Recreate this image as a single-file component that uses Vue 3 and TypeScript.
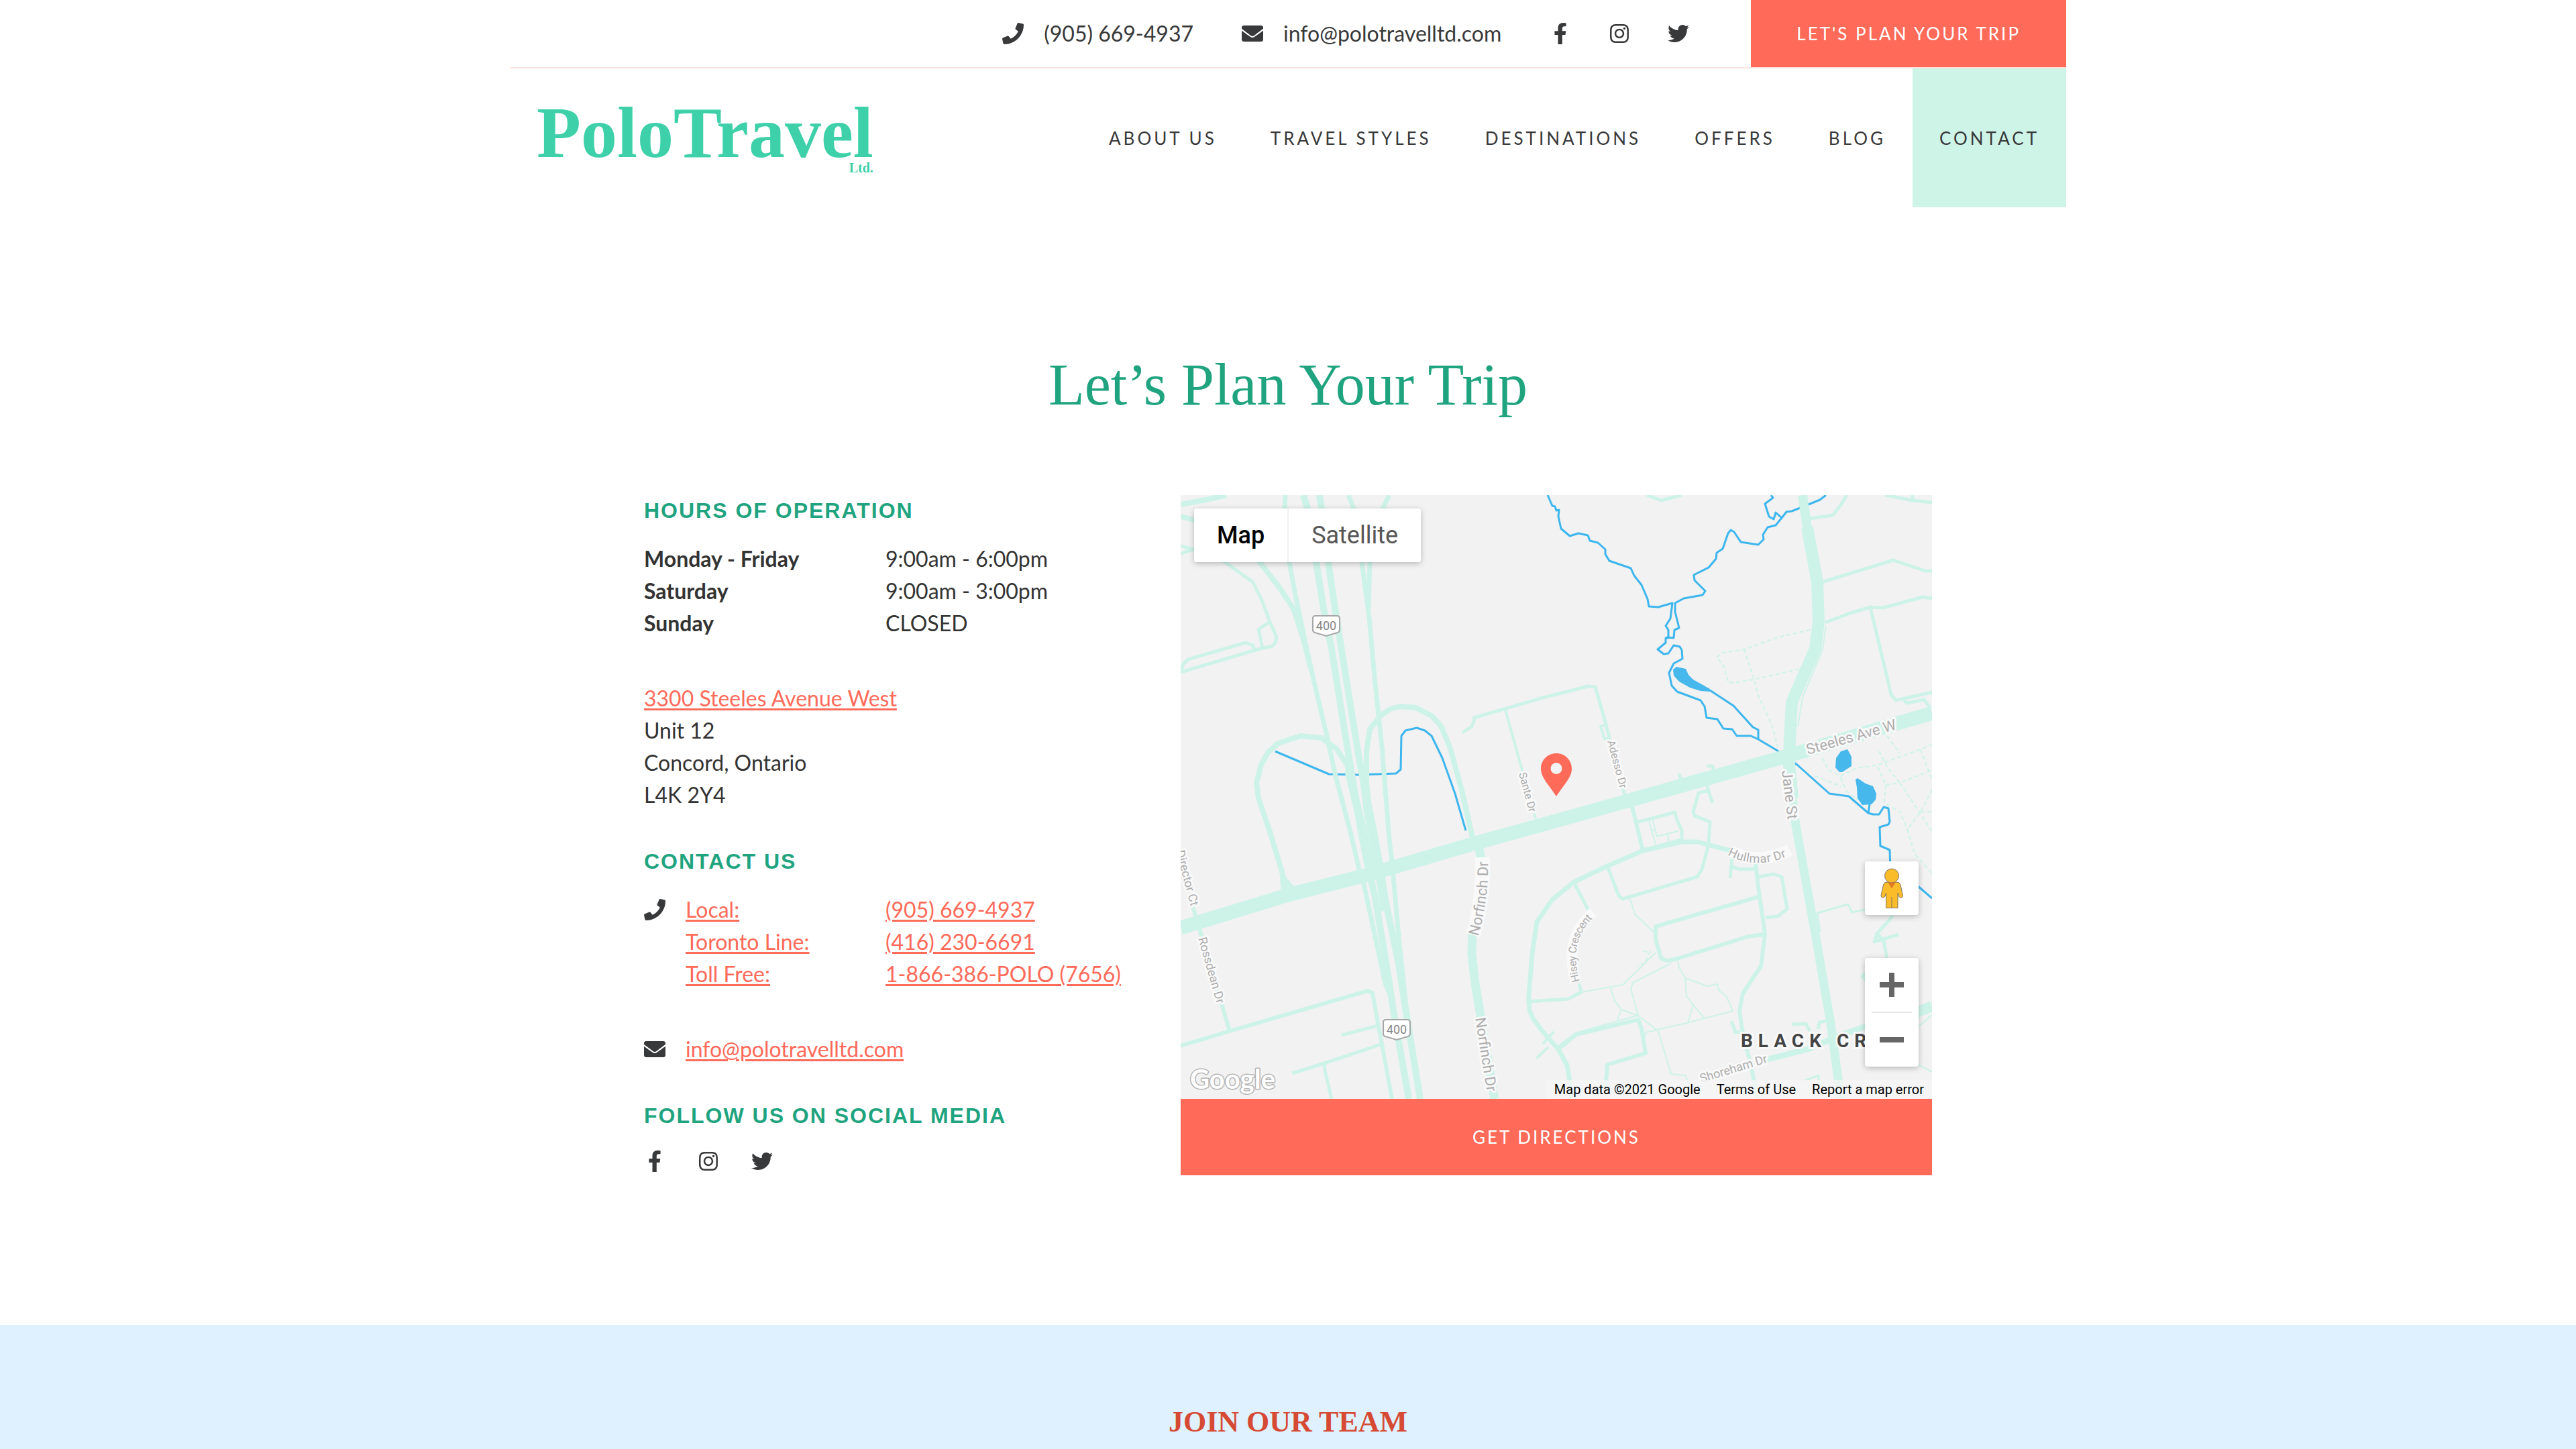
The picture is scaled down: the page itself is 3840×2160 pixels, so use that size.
<script setup lang="ts">
interface Icon {
  box: string
  path: string
}

interface Road {
  d: string
  w: number
}

interface StreetLabel {
  text: string
  x: number
  y: number
  angle: number
  size: number
}

const icons: Record<string, Icon> = {
  phone: {
    box: '0 0 512 512',
    path: 'M493.4 24.6l-104-24c-11.3-2.6-22.9 3.3-27.5 13.9l-48 112c-4.2 9.8-1.4 21.3 6.9 28l60.6 49.6c-36 76.7-98.9 140.5-177.2 177.2l-49.6-60.6c-6.8-8.3-18.2-11.1-28-6.9l-112 48C3.9 366.5-2 378.1.6 389.4l24 104C27.1 504.2 36.7 512 48 512c256.1 0 464-207.5 464-464 0-11.2-7.7-20.9-18.6-23.4z',
  },
  mail: {
    box: '0 0 512 512',
    path: 'M502.3 190.8c3.9-3.1 9.7-.2 9.7 4.7V400c0 26.5-21.5 48-48 48H48c-26.5 0-48-21.5-48-48V195.6c0-5 5.7-7.8 9.7-4.7 22.4 17.4 52.1 39.5 154.1 113.6 21.1 15.4 56.7 47.8 92.2 47.6 35.7.3 72-32.8 92.3-47.6 102-74.1 131.6-96.3 154-113.7zM256 320c23.2.4 56.6-29.2 73.4-41.4 132.7-96.3 142.8-104.7 173.4-128.7 5.8-4.5 9.2-11.5 9.2-18.9v-19c0-26.5-21.5-48-48-48H48c-26.5 0-48 21.5-48 48v19c0 7.4 3.4 14.3 9.2 18.9 30.6 23.9 40.7 32.4 173.4 128.7 16.8 12.2 50.2 41.8 73.4 41.4z',
  },
}

const socials: { name: string; icon: Icon }[] = [
  {
    name: 'Facebook',
    icon: {
      box: '0 0 320 512',
      path: 'M279.14 288l14.22-92.66h-88.91v-60.13c0-25.35 12.42-50.06 52.24-50.06h40.42V6.26S260.43 0 225.36 0c-73.22 0-121.08 44.38-121.08 124.72v70.62H22.89V288h81.39v224h100.17V288z',
    },
  },
  {
    name: 'Instagram',
    icon: {
      box: '0 0 448 512',
      path: 'M224.1 141c-63.6 0-114.9 51.3-114.9 114.9s51.3 114.9 114.9 114.9S339 319.5 339 255.9 287.7 141 224.1 141zm0 189.6c-41.1 0-74.7-33.5-74.7-74.7s33.5-74.7 74.7-74.7 74.7 33.5 74.7 74.7-33.6 74.7-74.7 74.7zm146.4-194.3c0 14.9-12 26.8-26.8 26.8-14.9 0-26.8-12-26.8-26.8s12-26.8 26.8-26.8 26.8 12 26.8 26.8zm76.1 27.2c-1.7-35.9-9.9-67.7-36.2-93.9-26.2-26.2-58-34.4-93.9-36.2-37-2.1-147.9-2.1-184.9 0-35.8 1.7-67.6 9.9-93.9 36.1s-34.4 58-36.2 93.9c-2.1 37-2.1 147.9 0 184.9 1.7 35.9 9.9 67.7 36.2 93.9s58 34.4 93.9 36.2c37 2.1 147.9 2.1 184.9 0 35.9-1.7 67.7-9.9 93.9-36.2 26.2-26.2 34.4-58 36.2-93.9 2.1-37 2.1-147.8 0-184.8zM398.8 388c-7.8 19.6-22.9 34.7-42.6 42.6-29.5 11.7-99.5 9-132.1 9s-102.7 2.6-132.1-9c-19.6-7.8-34.7-22.9-42.6-42.6-11.7-29.5-9-99.5-9-132.1s-2.6-102.7 9-132.1c7.8-19.6 22.9-34.7 42.6-42.6 29.5-11.7 99.5-9 132.1-9s102.7-2.6 132.1 9c19.6 7.8 34.7 22.9 42.6 42.6 11.7 29.5 9 99.5 9 132.1s2.7 102.7-9 132.1z',
    },
  },
  {
    name: 'Twitter',
    icon: {
      box: '0 0 512 512',
      path: 'M459.37 151.716c.325 4.548.325 9.097.325 13.645 0 138.72-105.583 298.558-298.558 298.558-59.452 0-114.68-17.219-161.137-47.106 8.447.974 16.568 1.299 25.34 1.299 49.055 0 94.213-16.568 130.274-44.832-46.132-.975-84.792-31.188-98.112-72.772 6.498.974 12.995 1.624 19.818 1.624 9.421 0 18.843-1.3 27.614-3.573-48.081-9.747-84.143-51.98-84.143-102.985v-1.299c13.969 7.797 30.214 12.67 47.431 13.319-28.264-18.843-46.781-51.005-46.781-87.391 0-19.492 5.197-37.36 14.294-52.954 51.655 63.675 129.3 105.258 216.365 109.807-1.624-7.797-2.599-15.918-2.599-24.04 0-57.828 46.782-104.934 104.934-104.934 30.213 0 57.502 12.67 76.67 33.137 23.715-4.548 46.456-13.32 66.599-25.34-7.798 24.366-24.366 44.833-46.132 57.827 21.117-2.273 41.584-8.122 60.426-16.243-14.292 20.791-32.161 39.308-52.628 54.253z',
    },
  },
]

const menu = ['About Us', 'Travel Styles', 'Destinations', 'Offers', 'Blog', 'Contact']
const currentPage = 'Contact'

const hours = [
  { day: 'Monday - Friday', time: '9:00am - 6:00pm' },
  { day: 'Saturday', time: '9:00am - 3:00pm' },
  { day: 'Sunday', time: 'CLOSED' },
]

const phones = [
  { label: 'Local:', number: '(905) 669-4937', tel: '+19056694937' },
  { label: 'Toronto Line:', number: '(416) 230-6691', tel: '+14162306691' },
  { label: 'Toll Free:', number: '1-866-386-POLO (7656)', tel: '+18663867656' },
]

/* Map geometry, in the 1120 x 900 space of the map drawing. */
const rivers = [
  'M547 0L554 16L558 17L560 23L564 22L563 32L567 50L580 61L593 57L607 60L610 68L622 71L633 81L633 88L639 98L671 109L676 120L687 134L696 155L698 166L712 167L733 161L730 184L723 195L727 201L727 213L723 213L723 220L711 230L720 237L727 236L735 224L744 226L747 231L748 244L735 251L728 265L732 284L740 293L775 306L781 315L784 332L800 334L809 348L822 349L829 359L850 359L861 364L888 380L919 402L967 445L996 449L1025 474L1032 476L1041 476L1048 465L1055 467L1057 487L1055 491L1042 495L1043 523L1057 529L1058 560',
  'M962 0L953 7L936 14L921 20L911 24L903 25L896 34L887 45L875 48L868 59L869 66L861 74L835 70L825 55L820 52L816 57L808 80L799 86L798 95L787 108L765 119L766 127L782 143L778 149L750 154L737 161L737 174L743 198L736 201L735 213L724 212',
  'M880 0L883 4L871 13L877 32L884 36L887 26L896 34',
  'M789 291L824 314L853 346L861 350L861 364',
  'M1027 461L1025 474',
  'M1098 582L1120 601',
  'M141 382L221 416L265 417L321 415L328 409L329 359L335 351L352 347L364 351L374 359L390 392L409 445L425 500',
]

const lakes = [
  'M734 260L739 256L753 259L757 268L764 275L789 289L789 293L775 292L759 287L743 278L735 269Z',
  'M984 382L994 379L1000 390L1000 404L986 413L982 413L976 406L977 392Z',
  'M1006 424L1009 422L1021 430L1032 434L1037 445L1036 454L1030 461L1016 462L1009 452L1008 436Z',
]

const roads: Road[] = [
  { d: 'M0 645L164 595L279 566L439 519L580 480L662 457L904 389L1120 325', w: 21 },
  { d: 'M927 0L934 49L944 105', w: 14 },
  { d: 'M934 49L949 129L951 189L946 229L911 309L908 365L907 402L912 452', w: 18 },
  { d: 'M908 420L917 492L946 654L969 788L984 900', w: 13 },
  { d: 'M0 14L38 7L68 0', w: 8 },
  { d: 'M0 32L40 42L90 70L118 100L148 139L168 169L183 215L194 259', w: 8 },
  { d: 'M0 76L20 81L0 87', w: 5 },
  { d: 'M40 84L66 100L108 130L122 159L133 189L143 212L141 220L137 225L122 228L0 264', w: 5 },
  { d: 'M0 262L4 252L11 245L97 220L108 224L110 231', w: 5 },
  { d: 'M133 189L116 200L122 228', w: 5 },
  { d: 'M156 0L155 20L162 100L171 149L187 225L198 275L217 355L231 419L253 502L266 558L273 580L286 640L305 728L312 745', w: 7 },
  { d: 'M183 0L189 20L202 100L214 175L225 229L244 349L259 440L269 502L280 558L290 600L305 690L319 780L340 900', w: 10 },
  { d: 'M207 0L210 20L220 100L231 175L248 282L267 399L288 502L298 558L305 603L325 699L334 758L357 900', w: 10 },
  { d: 'M250 410L272 502L284 562', w: 12 },
  { d: 'M271 400L279 470L296 560L305 620', w: 13 },
  { d: 'M250 0L258 20L270 100L281 182L290 282L300 375L310 502L316 558L326 669L335 751', w: 7 },
  { d: 'M311 0L301 20L290 60L282 100L280 169', w: 7 },
  { d: 'M166 596L156 580L150 558L133 502L116 452L113 429L120 402L130 384L145 370L179 359L210 362L233 379L248 402L262 460', w: 8 },
  { d: 'M154 594L152 570L166 586L176 592', w: 8 },
  { d: 'M277 432L277 382L282 349L298 329L312 319L327 315L351 317L374 329L388 344L401 375L419 440L437 519', w: 8 },
  { d: 'M441 517L446 532L453 580L435 640L434 684L439 728L447 776L468 900', w: 13 },
  { d: 'M420 354L434 345L438 334L437 332L540 302L607 285L618 286L634 342L664 455', w: 5 },
  { d: 'M484 320L529 482', w: 4 },
  { d: 'M634 342L626 345L632 364L638 362', w: 4 },
  { d: 'M695 0L716 8L747 0', w: 5 },
  { d: 'M938 35L972 30L984 15L993 0', w: 5 },
  { d: 'M1050 0L1091 8L1120 11M1091 0L1091 8', w: 5 },
  { d: 'M955 130L1062 97L1110 113L1120 113', w: 5 },
  { d: 'M961 190L995 177L1028 167L1047 168L1106 152L1120 154M1028 167L1059 297L1066 306L1120 294', w: 5 },
  { d: 'M1078 306L1083 310L1108 305L1118 318', w: 5 },
  { d: 'M962 195L957 230L927 302L920 345', w: 2 },
  { d: 'M743 415L747 432M785 404L793 404L796 418', w: 5 },
  { d: 'M784 429L787 442L793 459M785 441L772 444L764 472L766 478L789 487L787 521L777 558L770 569L659 602L653 597L636 553', w: 5 },
  { d: 'M672 460L689 530', w: 6 },
  { d: 'M682 487L737 473L739 482L747 500L747 514', w: 5 },
  { d: 'M697 482L708 521M703 482L710 509L741 501M703 500L708 499M726 506L728 517', w: 2 },
  { d: 'M689 528L747 512', w: 2 },
  { d: 'M519 760L519 745L524 684L531 636L554 603L586 577L636 553L689 530L747 517L770 517L816 529L861 542L907 529', w: 7 },
  { d: 'M519 750L520 768L525 780L540 800L563 826L576 850L580 873L582 900', w: 7 },
  { d: 'M586 577L611 625M594 728L597 741L578 751L519 755', w: 5 },
  { d: 'M530 840L548 823M540 818L556 800', w: 4 },
  { d: 'M597 741L659 730L708 682M670 602L677 625L705 651M641 735L647 754L657 767L682 776M657 767L651 782', w: 2 },
  { d: 'M861 599L708 643L708 662L716 690L724 694L737 692L846 658L869 655', w: 6 },
  { d: 'M857 549L861 584L871 654L865 702L838 743L833 769L838 802L850 850L860 900', w: 6 },
  { d: 'M822 542L819 571M821 554L835 558L857 557', w: 5 },
  { d: 'M861 569L884 565L896 569L904 617L890 628L872 630', w: 5 },
  { d: 'M731 698L674 727L671 736L682 776L712 799L731 863L752 865L758 878M741 695L743 704L752 720L785 732L800 729L802 738L814 748L823 769L754 787L693 801L691 810M752 720L754 747L764 760L781 780M764 760L756 787', w: 2 },
  { d: 'M563 826L590 804L682 782L687 795L693 832L636 849L633 885', w: 6 },
  { d: 'M680 776L588 802L561 823', w: 2 },
  { d: 'M821 784L827 801L834 800M911 789L932 788L938 799M962 784L952 786L950 796', w: 5 },
  { d: 'M860 845L938 825L976 808L1018 793L1060 780L1100 772', w: 9 },
  { d: 'M1080 778L1120 762', w: 16 },
  { d: 'M953 651L949 623L995 610L1001 622L1024 617', w: 3 },
  { d: 'M1062 627L1038 654L1034 666L1070 655M1038 654L1048 664L1053 692M1020 712L1016 718L1022 724', w: 5 },
  { d: 'M1098 848L1120 860M1100 792L1120 775', w: 2 },
  { d: 'M930 873L951 865L951 880', w: 3 },
  { d: 'M14 600L28 647L73 799', w: 6 },
  { d: 'M0 821L73 799L279 739L286 742L292 776L315 900', w: 6 },
  { d: 'M240 805L294 791M166 862L214 847L298 819M214 847L215 858L225 900', w: 5 },
]

const footpaths = [
  'M938 201L890 212L840 230L808 235L799 242L810 255L816 279L823 280L854 275L923 259',
  'M840 230L855 275L861 299L881 342L890 375',
  'M957 392L965 409L984 419L1007 407L1037 403L1103 379L1120 372',
  'M1041 382L1053 405L1072 429L1120 410',
  'M1053 359L1072 385M1103 379L1120 425',
  'M1039 405L1051 432L1049 459L1072 472L1085 502',
  'M1072 429L1101 472L1120 502',
  'M1120 439L1103 472L1083 499L1095 536L1120 564',
  'M946 419L984 434M984 422L993 442L1010 455',
  'M1051 432L1072 429M1103 472L1120 472',
  'M700 680L692 698L680 702M690 680L700 682',
]

const streetLabels: StreetLabel[] = [
  { text: 'Steeles Ave W', x: 935, y: 387, angle: -16, size: 22 },
  { text: 'Jane St', x: 896, y: 411, angle: 83, size: 22 },
  { text: 'Norfinch Dr', x: 439, y: 780, angle: 81, size: 22 },
  { text: 'Sante Dr', x: 504, y: 415, angle: 75, size: 16 },
  { text: 'Adesso Dr', x: 636, y: 367, angle: 75, size: 16 },
  { text: 'Rossdean Dr', x: 26, y: 661, angle: 74, size: 18 },
  { text: 'Director Ct', x: -7, y: 531, angle: 75, size: 18 },
  { text: 'Shoreham Dr', x: 776, y: 876, angle: -17, size: 18 },
]

/* Labels that bend with their street: the path runs through the middle of the letters. */
const curvedLabels = [
  { id: 'norfinch', text: 'Norfinch Dr', d: 'M436 656Q452 600 450 540', size: 22 },
  { id: 'hullmar', text: 'Hullmar Dr', d: 'M818 530Q861 553 908 529', size: 18 },
  { id: 'hisey', text: 'Hisey Crescent', d: 'M589 726Q570 660 615 622', size: 16 },
]

const shields = [
  { x: 217, y: 195 },
  { x: 322, y: 797 },
]
</script>

<template>
  <div class="page">
    <header class="header">
      <div class="topbar">
        <a class="quick" href="tel:+19056694937">
          <svg class="icon" :viewBox="icons.phone.box" aria-hidden="true"><path :d="icons.phone.path" /></svg>
          (905) 669-4937
        </a>
        <a class="quick" href="mailto:info@polotravelltd.com">
          <svg class="icon" :viewBox="icons.mail.box" aria-hidden="true"><path :d="icons.mail.path" /></svg>
          info@polotravelltd.com
        </a>
        <div class="socials socials-top">
          <a v-for="s in socials" :key="s.name" href="#" :aria-label="s.name">
            <svg class="icon" :viewBox="s.icon.box" aria-hidden="true"><path :d="s.icon.path" /></svg>
          </a>
        </div>
        <a class="plan" href="#plan">LET'S PLAN YOUR TRIP</a>
      </div>
      <div class="mainbar">
        <a class="logo" href="#">
          <span class="logo-name">PoloTravel</span>
          <span class="logo-suffix">Ltd.</span>
        </a>
        <nav class="menu">
          <a
            v-for="item in menu"
            :key="item"
            href="#"
            :class="{ current: item === currentPage }"
          >{{ item }}</a>
        </nav>
      </div>
    </header>

    <main class="content">
      <h1 id="plan">Let’s Plan Your Trip</h1>
      <div class="columns">
        <div class="details">
          <section>
            <h2>Hours of Operation</h2>
            <table class="hours">
              <tbody>
                <tr v-for="h in hours" :key="h.day">
                  <th scope="row">{{ h.day }}</th>
                  <td>{{ h.time }}</td>
                </tr>
              </tbody>
            </table>
            <address>
              <a href="#map">3300 Steeles Avenue West</a><br />
              Unit 12<br />
              Concord, Ontario<br />
              L4K 2Y4
            </address>
          </section>
          <section>
            <h2>Contact Us</h2>
            <div class="contact-row">
              <svg class="icon" :viewBox="icons.phone.box" aria-hidden="true"><path :d="icons.phone.path" /></svg>
              <ul class="phones">
                <li v-for="p in phones" :key="p.tel">
                  <a :href="'tel:' + p.tel">{{ p.label }}</a>
                  <a :href="'tel:' + p.tel">{{ p.number }}</a>
                </li>
              </ul>
            </div>
            <div class="contact-row contact-mail">
              <svg class="icon" :viewBox="icons.mail.box" aria-hidden="true"><path :d="icons.mail.path" /></svg>
              <a href="mailto:info@polotravelltd.com">info@polotravelltd.com</a>
            </div>
          </section>
          <section>
            <h2>Follow Us on Social Media</h2>
            <div class="socials">
              <a v-for="s in socials" :key="s.name" href="#" :aria-label="s.name">
                <svg class="icon" :viewBox="s.icon.box" aria-hidden="true"><path :d="s.icon.path" /></svg>
              </a>
            </div>
          </section>
        </div>

        <div id="map" class="location">
          <div class="map">
            <svg class="map-drawing" viewBox="0 0 1120 900" role="img" aria-label="Map of Steeles Avenue West">
              <rect width="1120" height="900" fill="#f2f2f2" />
              <g class="rivers"><path v-for="d in rivers" :key="d" :d="d" /></g>
              <g class="lakes"><path v-for="d in lakes" :key="d" :d="d" /></g>
              <g class="footpaths"><path v-for="d in footpaths" :key="d" :d="d" /></g>
              <g class="roads"><path v-for="r in roads" :key="r.d" :d="r.d" :stroke-width="r.w" /></g>
              <g v-for="s in shields" :key="s.y" class="shield">
                <path :d="`M${s.x - 16} ${s.y - 15}h32q4 0 4 4v17q0 3 -3 4L${s.x} ${s.y + 15}L${s.x - 17} ${s.y + 10}q-3 -1 -3 -4v-17q0 -4 4 -4z`" />
                <text :x="s.x" :y="s.y + 6" text-anchor="middle">400</text>
              </g>
              <g class="streets">
                <text
                  v-for="l in streetLabels"
                  :key="l.text"
                  :font-size="l.size"
                  :transform="`translate(${l.x} ${l.y}) rotate(${l.angle})`"
                >{{ l.text }}</text>
              </g>
              <g v-for="c in curvedLabels" :key="c.id" class="curved">
                <path :id="c.id" :d="c.d" :stroke-width="c.size" />
                <text :font-size="c.size"><textPath :href="'#' + c.id">{{ c.text }}</textPath></text>
              </g>
              <text class="district" x="835" y="823">BLACK CREEK</text>
              <path
                fill="#ff6a59"
                fill-rule="evenodd"
                d="M560 385c-13 0-23 10-23 23c0 13 12 24 23 41c11-17 23-28 23-41c0-13-10-23-23-23zM560 399a8 8 0 1 1 0 17a8 8 0 1 1 0-17z"
              />
              <text class="google" x="14" y="885">Google</text>
            </svg>

            <div class="map-types">
              <button type="button" class="active">Map</button>
              <button type="button">Satellite</button>
            </div>

            <button type="button" class="pegman" aria-label="Street View">
              <svg viewBox="0 0 34 60" aria-hidden="true">
                <g fill="#fbbc29" stroke="#7d7468" stroke-width="1">
                  <path d="M9 21h16q4 0 5 4l3.500 16q0 3-3 3q-2 0-3-2l-1.500-5v22.500h-17.500v-22.500l-1.500 5q-1 2-3 2q-3 0-3-3l3.500-16q1-4 5-4z" />
                  <path d="M17 43v16" />
                  <circle cx="17" cy="11.500" r="10.500" />
                </g>
                <path d="M11.500 21.500h11l-5.500 9z" fill="#e07a24" />
              </svg>
            </button>

            <div class="zoom">
              <button type="button" aria-label="Zoom in">
                <svg viewBox="0 0 36 36" aria-hidden="true"><path d="M14 0h8v14h14v8H22v14h-8V22H0v-8h14z" /></svg>
              </button>
              <button type="button" aria-label="Zoom out">
                <svg viewBox="0 0 36 36" aria-hidden="true"><path d="M0 14h36v8H0z" /></svg>
              </button>
            </div>

            <div class="attribution">
              <span>Map data ©2021 Google</span>
              <a href="#">Terms of Use</a>
              <a href="#">Report a map error</a>
            </div>
          </div>
          <a class="directions" href="#">GET DIRECTIONS</a>
        </div>
      </div>
    </main>

    <section class="team">
      <h2>JOIN OUR TEAM</h2>
    </section>
  </div>
</template>

<style>
body {
  background: #fff;
}
</style>

<style scoped>
.page {
  display: flex;
  flex-direction: column;
  min-height: 100vh;
  font-family: Lato, "Open Sans", sans-serif;
  font-size: 32px;
  line-height: 48px;
  color: #333;
}

.icon {
  display: block;
  flex: none;
  width: 32px;
  height: 32px;
  fill: #38393a;
}

.header {
  width: 100%;
  max-width: 2320px;
  margin: 0 auto;
}

.topbar {
  display: flex;
  align-items: center;
  justify-content: flex-end;
  height: 100px;
  border-bottom: 2px solid #ffe2d9;
}

.quick {
  display: flex;
  align-items: center;
  gap: 30px;
  margin-right: 72px;
  color: #38393a;
  text-decoration: none;
}

.socials {
  display: flex;
  align-items: center;
  gap: 48px;
  height: 40px;
}

.socials-top {
  gap: 56px;
  margin-right: 92px;
}

.plan,
.directions {
  display: flex;
  align-items: center;
  justify-content: center;
  background: #ff6a59;
  color: #fff;
  font-size: 26px;
  letter-spacing: 3px;
  text-decoration: none;
}

.plan {
  align-self: stretch;
  padding: 0 68px;
}

.mainbar {
  display: flex;
  justify-content: space-between;
  height: 207px;
}

.logo {
  display: flex;
  flex-direction: column;
  align-items: flex-end;
  padding: 56px 0 0 40px;
  color: #3dd0a9;
  font-family: "Liberation Serif", serif;
  font-weight: 700;
  text-decoration: none;
}

.logo-name {
  font-size: 108px;
  line-height: 80px;
}

.logo-suffix {
  font-size: 20px;
  line-height: 24px;
}

.menu {
  display: flex;
}

.menu a {
  display: flex;
  align-items: center;
  padding: 0 40px;
  color: #38393a;
  font-size: 26px;
  letter-spacing: 4px;
  text-decoration: none;
  text-transform: uppercase;
}

.menu .current {
  background: #cef4e8;
}

.content {
  width: 100%;
  max-width: 1920px;
  margin: 0 auto;
  padding: 213px 0 223px;
}

h1 {
  margin: 0 0 112px;
  color: #1fa47f;
  font-family: "Liberation Serif", serif;
  font-size: 88px;
  font-weight: 400;
  line-height: 104px;
  text-align: center;
}

.columns {
  display: grid;
  grid-template-columns: 5fr 7fr;
  align-items: start;
}

.details {
  display: flex;
  flex-direction: column;
  gap: 52px;
}

.details h2 {
  margin: 0 0 25px;
  color: #1fa47f;
  font-family: "Liberation Sans", sans-serif;
  font-size: 32px;
  font-weight: 700;
  letter-spacing: 2px;
  line-height: 46px;
  text-transform: uppercase;
}

.details address a,
.contact-row a {
  color: #ff6a59;
  text-decoration-thickness: 3px;
  text-underline-offset: 3px;
}

.hours {
  border-collapse: collapse;
}

.hours th,
.hours td {
  padding: 0;
  text-align: left;
}

.hours th {
  width: 360px;
  font-weight: 700;
}

address {
  margin-top: 64px;
  font-style: normal;
}

.contact-row {
  display: flex;
  gap: 30px;
}

.contact-row .icon {
  margin-top: 8px;
}

.contact-mail {
  margin-top: 64px;
}

.phones {
  margin: 0;
  padding: 0;
  list-style: none;
}

.phones li {
  display: grid;
  grid-template-columns: 298px auto;
  justify-items: start;
}

.map {
  position: relative;
  font-family: Roboto, sans-serif;
}

.map-drawing {
  display: block;
  width: 100%;
}

.rivers path {
  fill: none;
  stroke: #3db6ee;
  stroke-width: 3;
  stroke-linejoin: round;
}

.lakes path {
  fill: #47b8ec;
}

.roads path {
  fill: none;
  stroke: #cdf3e8;
  stroke-linejoin: round;
}

.footpaths path {
  fill: none;
  stroke: #cdf3e8;
  stroke-width: 2;
  stroke-dasharray: 6 4;
}

.shield path {
  fill: #fff;
  stroke: #a6a6a6;
  stroke-width: 2;
}

.shield text {
  fill: #858585;
  font-size: 18px;
}

.streets text {
  fill: #adadad;
  stroke: #f9f9f9;
  stroke-width: 6px;
  stroke-linejoin: round;
  paint-order: stroke;
}

.curved path {
  fill: none;
  stroke: #f9f9f9;
}

.curved text {
  fill: #adadad;
  dominant-baseline: central;
}

.district {
  fill: #444;
  stroke: #f9f9f9;
  stroke-width: 6px;
  paint-order: stroke;
  font-size: 28px;
  font-weight: 700;
  letter-spacing: 8px;
}

.google {
  fill: #fff;
  stroke: #b4b4b4;
  stroke-width: 3px;
  stroke-linejoin: round;
  paint-order: stroke;
  font-family: Lato, sans-serif;
  font-size: 40px;
  font-weight: 700;
}

.map button {
  border: 0;
  padding: 0;
  background: #fff;
  color: #565656;
  font-family: inherit;
}

.map-types {
  position: absolute;
  top: 20px;
  left: 20px;
  display: flex;
  border-radius: 4px;
  overflow: hidden;
  box-shadow: 0 2px 8px rgba(0, 0, 0, 0.25);
}

.map .map-types button {
  height: 80px;
  padding: 0 34px;
  font-size: 36px;
}

.map .map-types .active {
  border-right: 2px solid #f1f1f1;
  color: #000;
  font-weight: 500;
}

.map .pegman,
.zoom {
  position: absolute;
  right: 20px;
  width: 80px;
  border-radius: 4px;
  box-shadow: 0 2px 8px rgba(0, 0, 0, 0.25);
}

.map .pegman {
  bottom: 274px;
  display: flex;
  align-items: center;
  justify-content: center;
  height: 80px;
}

.pegman svg {
  width: 34px;
  height: 60px;
}

.zoom {
  bottom: 48px;
  display: flex;
  flex-direction: column;
  align-items: center;
  background: #fff;
}

.zoom button {
  display: flex;
  align-items: center;
  justify-content: center;
  width: 60px;
  height: 80px;
}

.map .zoom button + button {
  height: 82px;
  border-top: 2px solid #e6e6e6;
}

.zoom svg {
  width: 36px;
  height: 36px;
  fill: #666;
}

.attribution {
  position: absolute;
  right: 0;
  bottom: 0;
  display: flex;
  gap: 24px;
  padding: 0 12px;
  background: rgba(245, 245, 245, 0.8);
  font-size: 20px;
  line-height: 28px;
  color: #000;
}

.attribution a {
  color: #000;
  text-decoration: none;
}

.directions {
  height: 114px;
}

.team {
  flex: 1;
  padding: 117px 0 12px;
  background: #dff1ff;
}

.team h2 {
  margin: 0;
  color: #d64a34;
  font-family: "Liberation Serif", serif;
  font-size: 44px;
  font-weight: 700;
  line-height: 56px;
  text-align: center;
}
</style>
